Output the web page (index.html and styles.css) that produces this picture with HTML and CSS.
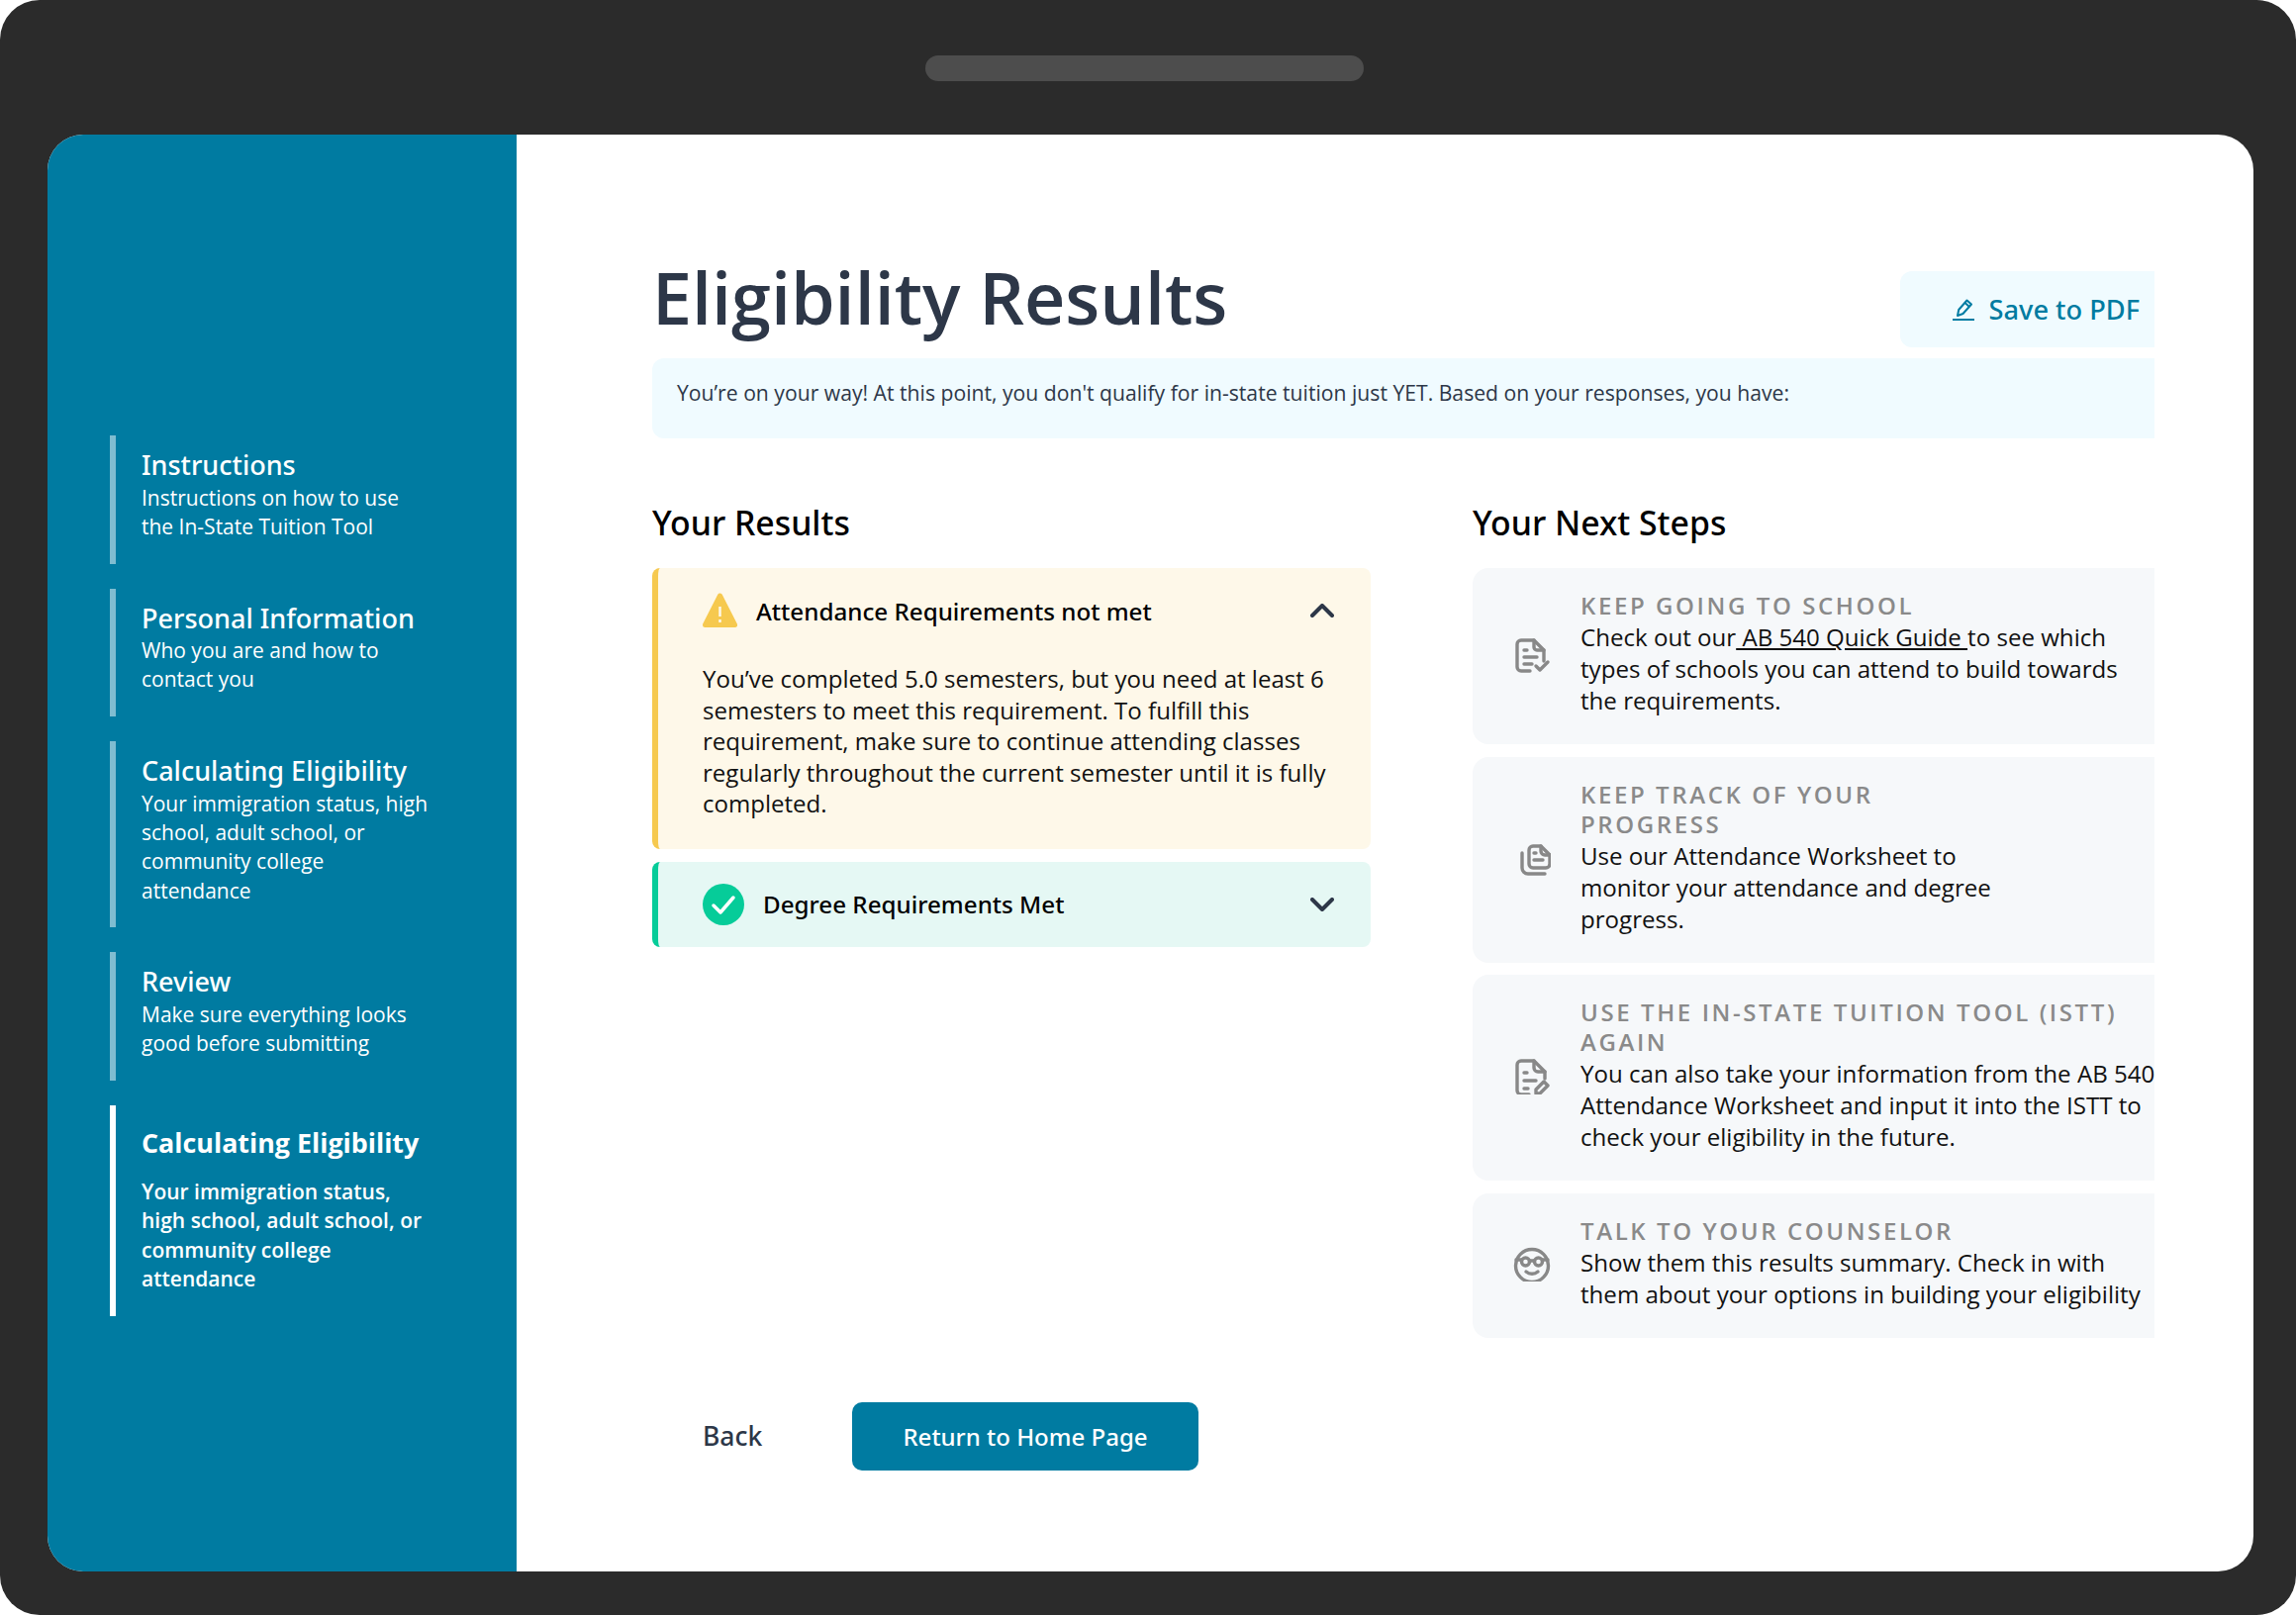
FILE: index.html
```html
<!DOCTYPE html>
<html lang="en">
<head>
    <meta charset="UTF-8">
    <meta name="viewport" content="width=device-width, initial-scale=1.0">
    <title>Eligibility Results</title>
    <link rel="stylesheet" href="styles.css">
</head>
<body>
    <div class="device">
        <div class="device-top"><div class="notch"></div></div>
        <div class="screen">
            <nav class="sidebar">
                <div class="nav-item">
                    <div class="nav-title">Instructions</div>
                    <div class="nav-text">Instructions on how to use<br>the In-State Tuition Tool</div>
                </div>
                <div class="nav-item">
                    <div class="nav-title">Personal Information</div>
                    <div class="nav-text">Who you are and how to<br>contact you</div>
                </div>
                <div class="nav-item">
                    <div class="nav-title">Calculating Eligibility</div>
                    <div class="nav-text">Your immigration status, high<br>school, adult school, or<br>community college<br>attendance</div>
                </div>
                <div class="nav-item">
                    <div class="nav-title">Review</div>
                    <div class="nav-text">Make sure everything looks<br>good before submitting</div>
                </div>
                <div class="nav-item active">
                    <div class="nav-title">Calculating Eligibility</div>
                    <div class="nav-text">Your immigration status,<br>high school, adult school, or<br>community college<br>attendance</div>
                </div>
            </nav>
            <main class="content">
                <div class="page-head">
                    <h1>Eligibility Results</h1>
                    <button class="save-button">
                        <svg class="save-icon" viewBox="0 0 22 23" fill="none" stroke="#007ca3" stroke-width="2" stroke-linejoin="round">
                            <path d="M5 18l1.2-6L14.500 2.500l4.500 4-8.500 9.500z"/>
                            <path d="M12.500 5l4.500 4"/>
                            <path d="M0 22h22"/>
                        </svg>
                        Save to PDF
                    </button>
                </div>
                <div class="notice">You’re on your way! At this point, you don't qualify for in-state tuition just YET. Based on your responses, you have:</div>
                <div class="columns">
                    <section>
                        <h2>Your Results</h2>
                        <div class="accordion warn">
                            <div class="accordion-head">
                                <svg class="warn-icon" viewBox="0 0 35 36">
                                    <path d="M17.500 3L32.500 32.500H2.500z" fill="#f6c94f" stroke="#f6c94f" stroke-width="5" stroke-linejoin="round"/>
                                    <path d="M17.500 14v10M17.500 27v3" stroke="#fef8e9" stroke-width="2.500"/>
                                </svg>
                                <span class="accordion-title">Attendance Requirements not met</span>
                                <svg class="chevron" viewBox="0 0 24 14" fill="none" stroke="#2d3748" stroke-width="4" stroke-linecap="round" stroke-linejoin="round"><path d="M2 12L12 2l10 10"/></svg>
                            </div>
                            <p class="accordion-body">You’ve completed 5.0 semesters, but you need at least 6 semesters to meet this requirement. To fulfill this requirement, make sure to continue attending classes regularly throughout the current semester until it is fully completed.</p>
                        </div>
                        <div class="accordion good">
                            <div class="accordion-head">
                                <svg class="good-icon" viewBox="0 0 42 42">
                                    <circle cx="21" cy="21" r="21" fill="#06cc99"/>
                                    <path d="M11 22l7 7 13-15" fill="none" stroke="#fff" stroke-width="3.500" stroke-linecap="round" stroke-linejoin="round"/>
                                </svg>
                                <span class="accordion-title">Degree Requirements Met</span>
                                <svg class="chevron" viewBox="0 0 24 14" fill="none" stroke="#2d3748" stroke-width="4" stroke-linecap="round" stroke-linejoin="round"><path d="M2 2l10 10L22 2"/></svg>
                            </div>
                        </div>
                    </section>
                    <section>
                        <h2>Your Next Steps</h2>
                        <div class="steps">
                            <div class="step">
                                <svg class="step-icon" viewBox="-2 -3 38 38" fill="none">
                                    <path d="M15 33H6a4 4 0 0 1-4-4V6a4 4 0 0 1 4-4h13l10 10v11"/>
                                    <path d="M19 2v7a3 3 0 0 0 3 3h7"/>
                                    <path d="M9 12h3M9 19h13M9 26h8"/>
                                    <path d="M21 28l4 4 8-8"/>
                                </svg>
                                <div class="step-text">
                                    <h3>Keep going to school</h3>
                                    <p>Check out our<a href="#"> AB 540 Quick Guide </a>to see which types of schools you can attend to build towards the requirements.</p>
                                </div>
                            </div>
                            <div class="step narrow">
                                <svg class="step-icon" viewBox="-7 -6 38 38" fill="none">
                                    <path d="M13 2h8l9 9v9a4 4 0 0 1-4 4H13a4 4 0 0 1-4-4V6a4 4 0 0 1 4-4z"/>
                                    <path d="M21 2v5a4 4 0 0 0 4 4h5"/>
                                    <path d="M14 9h2M14 16h9"/>
                                    <path d="M2 9v15a6 6 0 0 0 6 6h17"/>
                                </svg>
                                <div class="step-text">
                                    <h3>Keep track of your progress</h3>
                                    <p>Use our Attendance Worksheet to monitor your attendance and degree progress.</p>
                                </div>
                            </div>
                            <div class="step">
                                <svg class="step-icon" viewBox="-2 -2 38 38" fill="none">
                                    <path d="M14 36H6a4 4 0 0 1-4-4V6a4 4 0 0 1 4-4h13l11 11v7"/>
                                    <path d="M19 2v7a4 4 0 0 0 4 4h7"/>
                                    <path d="M9 14h3M9 22h12M9 30h4"/>
                                    <path d="M21 35v-4l8-8 4 4-8 8z"/>
                                </svg>
                                <div class="step-text">
                                    <h3>Use the In-State Tuition Tool (ISTT) again</h3>
                                    <p>You can also take your information from the AB 540 Attendance Worksheet and input it into the ISTT to check your eligibility in the future.</p>
                                </div>
                            </div>
                            <div class="step">
                                <svg class="step-icon" viewBox="-1 -4 38 38" fill="none">
                                    <circle cx="18" cy="18" r="16.500"/>
                                    <circle cx="11.500" cy="14" r="4"/>
                                    <circle cx="24.500" cy="14" r="4"/>
                                    <path d="M2 12h5.500M15.500 13h5M28.500 12H34"/>
                                    <path d="M12 24c3.500 3 8.500 3 12 0"/>
                                </svg>
                                <div class="step-text">
                                    <h3>Talk to your counselor</h3>
                                    <p>Show them this results summary. Check in with them about your options in building your eligibility</p>
                                </div>
                            </div>
                        </div>
                    </section>
                </div>
                <div class="actions">
                    <button class="back-button">Back</button>
                    <button class="home-button">Return to Home Page</button>
                </div>
            </main>
        </div>
    </div>
</body>
</html>
```

FILE: styles.css
```css
* {
    font-family: 'Open Sans', 'Noto Sans', sans-serif;
    box-sizing: border-box;
}

html, body {
    margin: 0;
    height: 1632px;
    background: #fff;
    overflow: hidden;
}

.device {
    height: 1632px;
    padding: 0 43px 44px 48px;
    background: #2b2b2b;
    border-radius: 40px;
    display: flex;
    flex-direction: column;
}

.device-top {
    height: 136px;
    padding-top: 56px;
    display: flex;
    justify-content: center;
}

.notch {
    width: 443px;
    height: 26px;
    background: #4d4d4d;
    border-radius: 13px;
    margin-right: 12px;
}

.screen {
    flex: 1;
    display: flex;
    background: #fff;
    border-radius: 36px;
    overflow: hidden;
}

.sidebar {
    width: 474px;
    padding: 304px 0 0 63px;
    background: #007ba1;
    color: #fff;
    display: flex;
    flex-direction: column;
    gap: 25px;
}

.nav-item {
    padding: 13px 0 22.500px 26px;
    border-left: 6px solid #7fbdd1;
}

.nav-title {
    font-family: 'Noto Sans', sans-serif;
    font-size: 27px;
    font-weight: 500;
    line-height: 34px;
    margin-bottom: 1.500px;
}

.nav-text {
    font-size: 21px;
    line-height: 29.300px;
}

.nav-item.active {
    padding: 21px 0 23px 26px;
    border-left-color: #fff;
}

.active .nav-title {
    font-family: 'Open Sans', sans-serif;
    font-size: 26.850px;
    font-weight: 700;
    margin-bottom: 18px;
}

.active .nav-text {
    font-weight: 600;
}

.content {
    flex: 1;
    padding: 138px 100px 0 137px;
    display: flex;
    flex-direction: column;
}

.page-head {
    height: 77px;
    display: flex;
    justify-content: space-between;
}

h1 {
    margin: 0;
    font-size: 71.800px;
    font-weight: 600;
    line-height: 53px;
    color: #2d3748;
}

.save-button {
    width: 257px;
    padding: 0 15px 0 0;
    background: #f0fbff;
    border: none;
    border-radius: 12px 0 0 12px;
    color: #007ba1;
    font-family: 'Noto Sans', sans-serif;
    font-size: 27.200px;
    font-weight: 500;
    display: flex;
    align-items: center;
    justify-content: flex-end;
    gap: 15px;
}

.save-icon {
    width: 22px;
    height: 23px;
}

.notice {
    height: 81px;
    margin-top: 11px;
    padding: 19px 0 0 25px;
    background: #f0fbff;
    border-radius: 12px 0 0 12px;
    color: #2d3748;
    font-size: 21.170px;
    line-height: 32px;
}

.columns {
    margin-top: 65px;
    display: grid;
    grid-template-columns: 726px 689px;
    gap: 103px;
}

h2 {
    margin: 0 0 24px;
    font-family: 'Noto Sans', sans-serif;
    font-size: 33.800px;
    font-weight: 500;
    line-height: 41px;
    padding-bottom: 1px;
    color: #000;
}

.accordion {
    border-left: 6px solid;
    border-radius: 8px;
    margin-bottom: 13px;
}

.warn {
    background: #fef8e9;
    border-color: #f6c94f;
}

.good {
    background: #e5f8f4;
    border-color: #06cc99;
}

.accordion-head {
    height: 86px;
    padding: 0 37px 0 45px;
    display: flex;
    align-items: center;
}

.warn-icon {
    width: 35px;
    height: 36px;
    margin-right: 19px;
}

.good-icon {
    width: 42px;
    height: 42px;
    margin-right: 19px;
}

.accordion-title {
    flex: 1;
    font-family: 'Noto Sans', sans-serif;
    font-size: 24.200px;
    font-weight: 500;
    color: #000;
}

.chevron {
    width: 24px;
    height: 14px;
}

.accordion-body {
    margin: 10px 0 0;
    padding: 0 37px 30px 45px;
    font-size: 24.050px;
    line-height: 31.500px;
    color: #111;
}

.steps {
    display: flex;
    flex-direction: column;
    gap: 12.500px;
}

.step {
    padding: 23px 0 28px 0;
    background: #f6f8fa;
    border-radius: 16px 0 0 16px;
    display: flex;
    align-items: center;
}

.step-icon {
    width: 38px;
    height: 38px;
    margin: 0 30px 0 41px;
    flex-shrink: 0;
    stroke: #888;
    stroke-width: 3.400;
    stroke-linecap: round;
    stroke-linejoin: round;
}

.step-text {
    flex: none;
    width: 582px;
}

.narrow .step-text {
    width: 440px;
}

h3 {
    margin: 0;
    font-size: 24px;
    font-weight: 600;
    line-height: 30px;
    letter-spacing: 2.600px;
    text-transform: uppercase;
    color: #8a8a8a;
}

.step p {
    margin: 1px 0 0;
    font-size: 24.100px;
    line-height: 32px;
    color: #111;
}

.step a {
    color: inherit;
}

.actions {
    margin-top: 65px;
    display: flex;
    align-items: center;
}

.actions button {
    border: none;
    cursor: pointer;
    font-family: 'Noto Sans', sans-serif;
    font-weight: 500;
}

.back-button {
    width: 202px;
    height: 69px;
    padding: 0 0 0 51px;
    text-align: left;
    background: none;
    color: #2d3748;
    font-size: 26.500px;
}

.home-button {
    width: 350px;
    height: 69px;
    background: #007ba1;
    color: #fff;
    border-radius: 10px;
    font-size: 24px;
}
```
